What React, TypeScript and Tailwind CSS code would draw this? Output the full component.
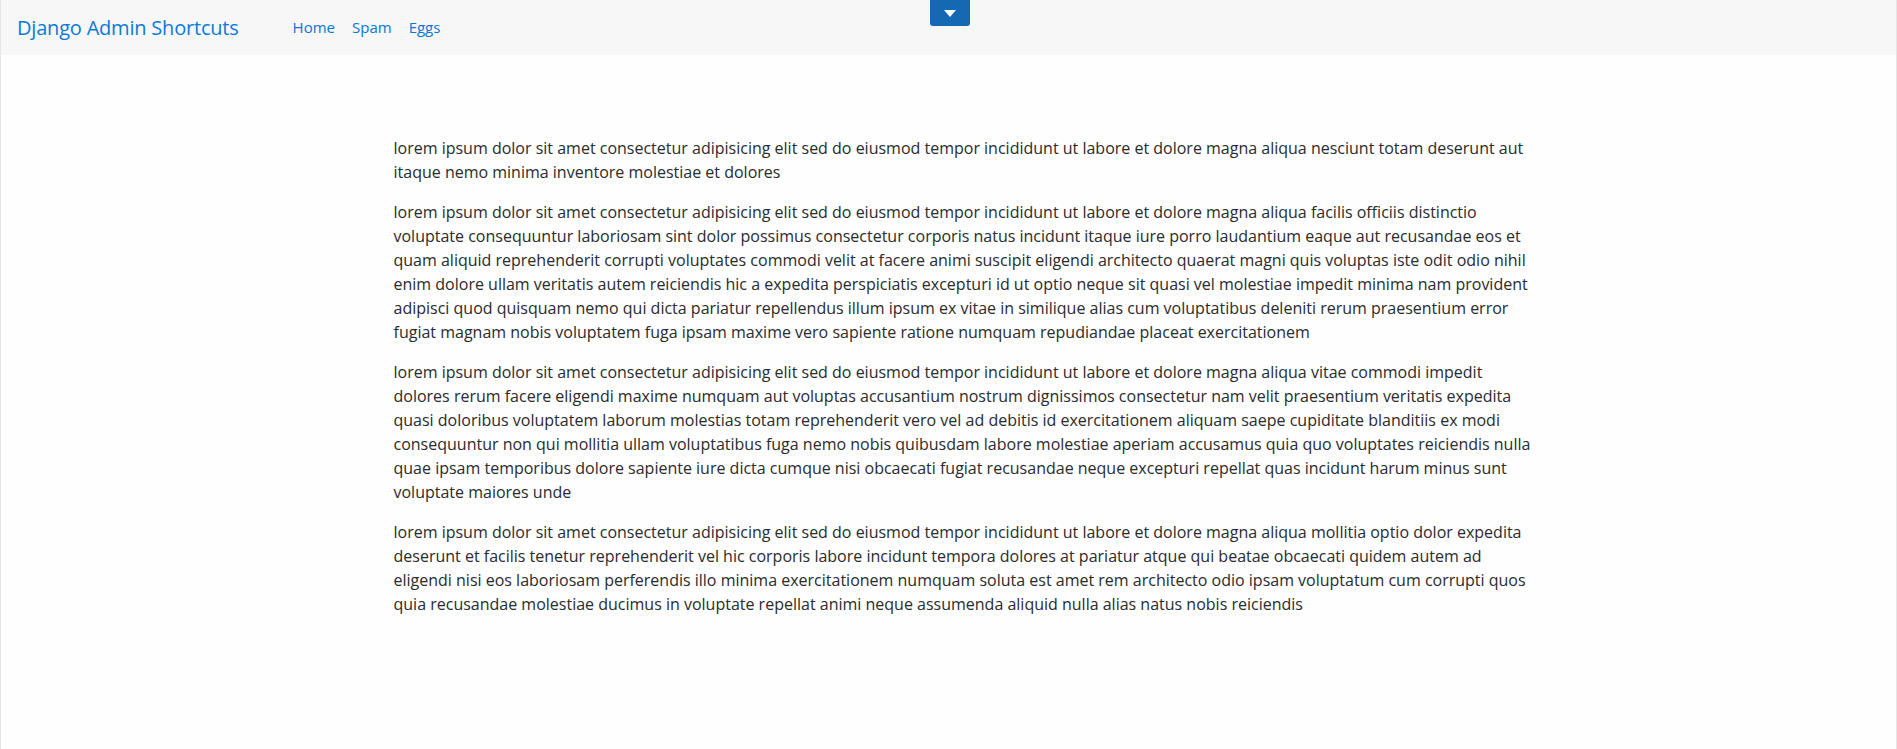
const paragraphs: string[][] = [
  [
    "lorem ipsum dolor sit amet consectetur adipisicing elit sed do eiusmod tempor incididunt ut labore et dolore magna aliqua nesciunt totam deserunt aut",
    "itaque nemo minima inventore molestiae et dolores",
  ],
  [
    "lorem ipsum dolor sit amet consectetur adipisicing elit sed do eiusmod tempor incididunt ut labore et dolore magna aliqua facilis officiis distinctio",
    "voluptate consequuntur laboriosam sint dolor possimus consectetur corporis natus incidunt itaque iure porro laudantium eaque aut recusandae eos et",
    "quam aliquid reprehenderit corrupti voluptates commodi velit at facere animi suscipit eligendi architecto quaerat magni quis voluptas iste odit odio nihil",
    "enim dolore ullam veritatis autem reiciendis hic a expedita perspiciatis excepturi id ut optio neque sit quasi vel molestiae impedit minima nam provident",
    "adipisci quod quisquam nemo qui dicta pariatur repellendus illum ipsum ex vitae in similique alias cum voluptatibus deleniti rerum praesentium error",
    "fugiat magnam nobis voluptatem fuga ipsam maxime vero sapiente ratione numquam repudiandae placeat exercitationem",
  ],
  [
    "lorem ipsum dolor sit amet consectetur adipisicing elit sed do eiusmod tempor incididunt ut labore et dolore magna aliqua vitae commodi impedit",
    "dolores rerum facere eligendi maxime numquam aut voluptas accusantium nostrum dignissimos consectetur nam velit praesentium veritatis expedita",
    "quasi doloribus voluptatem laborum molestias totam reprehenderit vero vel ad debitis id exercitationem aliquam saepe cupiditate blanditiis ex modi",
    "consequuntur non qui mollitia ullam voluptatibus fuga nemo nobis quibusdam labore molestiae aperiam accusamus quia quo voluptates reiciendis nulla",
    "quae ipsam temporibus dolore sapiente iure dicta cumque nisi obcaecati fugiat recusandae neque excepturi repellat quas incidunt harum minus sunt",
    "voluptate maiores unde",
  ],
  [
    "lorem ipsum dolor sit amet consectetur adipisicing elit sed do eiusmod tempor incididunt ut labore et dolore magna aliqua mollitia optio dolor expedita",
    "deserunt et facilis tenetur reprehenderit vel hic corporis labore incidunt tempora dolores at pariatur atque qui beatae obcaecati quidem autem ad",
    "eligendi nisi eos laboriosam perferendis illo minima exercitationem numquam soluta est amet rem architecto odio ipsam voluptatum cum corrupti quos",
    "quia recusandae molestiae ducimus in voluptate repellat animi neque assumenda aliquid nulla alias natus nobis reiciendis",
  ],
];

const links = ["Home", "Spam", "Eggs"];

const App = () => {
  return (
    <div className="min-h-[749px] bg-[#fefefe] border-x border-[#e6e6e6] font-['Open_Sans',sans-serif]">
      <nav className="relative h-[55px] bg-[#f7f7f7] flex items-center pl-[16px]">
        <a className="text-[20px] text-[#0a7bd9] tracking-[-0.2px]">Django Admin Shortcuts</a>
        <ul className="flex items-center gap-[17px] ml-[54px] text-[15px] text-[#0a76d4]">
          {links.map((link) => (
            <li key={link}>
              <a>{link}</a>
            </li>
          ))}
        </ul>
        <button className="absolute left-[929px] top-0 w-[40px] h-[26px] bg-[#1569b3] rounded-b-[3px] flex items-center justify-center">
          <svg width="12" height="7" viewBox="0 0 12 7">
            <path d="M0 0 L12 0 L6 7 Z" fill="#ffffff" />
          </svg>
        </button>
      </nav>
      <main className="w-[1140px] mx-auto px-[15px] pt-[81px]">
        {paragraphs.map((lines, i) => (
          <p key={i} className="mb-[16px] text-[16px] leading-[24px] text-[#292b2c] whitespace-nowrap">
            {lines.map((line, j) => (
              <span key={j}>
                {line}
                {j < lines.length - 1 && <br />}
              </span>
            ))}
          </p>
        ))}
      </main>
    </div>
  );
};

export default App;
